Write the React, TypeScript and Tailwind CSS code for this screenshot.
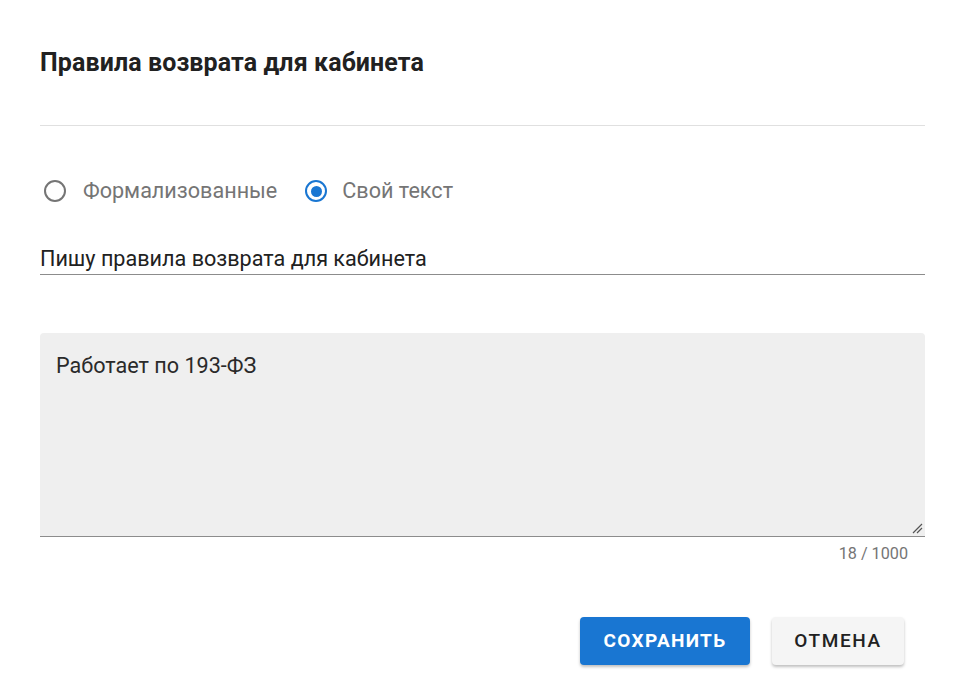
import React from "react";

export default function App() {
  return (
    <div className="w-[966px] h-[700px] bg-white text-[#212121] relative" style={{ fontFamily: "Roboto, 'Noto Sans', sans-serif" }}>
      <div className="pl-10 pr-[41px] pt-[47px]">
        <h2 className="text-[25px] leading-[32px] font-bold text-[#212121] tracking-[0.1px]">Правила возврата для кабинета</h2>
        <div className="mt-[46px] h-px bg-[#e0e0e0]" />
        <div className="mt-[54px] flex items-center h-[22px] text-[21.6px] text-[#757575]">
          <div className="ml-[4px] w-[22px] h-[22px] rounded-full border-2 border-[#757575]" />
          <span className="ml-[17px]">Формализованные</span>
          <div className="ml-[28px] w-[22px] h-[22px] rounded-full border-2 border-[#1976d2] flex items-center justify-center">
            <div className="w-[11px] h-[11px] rounded-full bg-[#1976d2]" />
          </div>
          <span className="ml-[15px]">Свой текст</span>
        </div>
        <div className="mt-[44px] border-b border-[#8c8c8c] pb-[2px] text-[21.6px] leading-[26px] text-[#212121]">
          Пишу правила возврата для кабинета
        </div>
        <div className="mt-[58px] h-[204px] bg-[#efefef] rounded-t-[4px] border-b border-[#8c8c8c] relative px-4 pt-[20px] text-[21.6px] leading-[26px] text-[#2a2a2a]">
          Работает по 193-ФЗ
          <svg className="absolute right-[2px] bottom-[2px]" width="12" height="12" viewBox="0 0 12 12">
            <path d="M11 2 L2 11 M11 6 L6 11" stroke="#555" strokeWidth="1.2" fill="none" />
          </svg>
        </div>
        <div className="mt-[7px] pr-[17px] text-right text-[16.2px] leading-[20px] text-[#757575]">18 / 1000</div>
        <div className="mt-[53px] flex justify-end pr-[21px] gap-[22px]">
          <button className="h-[48px] w-[170px] rounded-[4px] bg-[#1976d2] text-white text-[19px] font-bold tracking-[1.3px] shadow-[0_2px_3px_rgba(0,0,0,0.25)]">
            СОХРАНИТЬ
          </button>
          <button className="h-[48px] w-[132px] rounded-[4px] bg-[#f5f5f5] text-[#212121] text-[19px] font-medium tracking-[1.6px] shadow-[0_2px_3px_rgba(0,0,0,0.25)]">
            ОТМЕНА
          </button>
        </div>
      </div>
    </div>
  );
}
